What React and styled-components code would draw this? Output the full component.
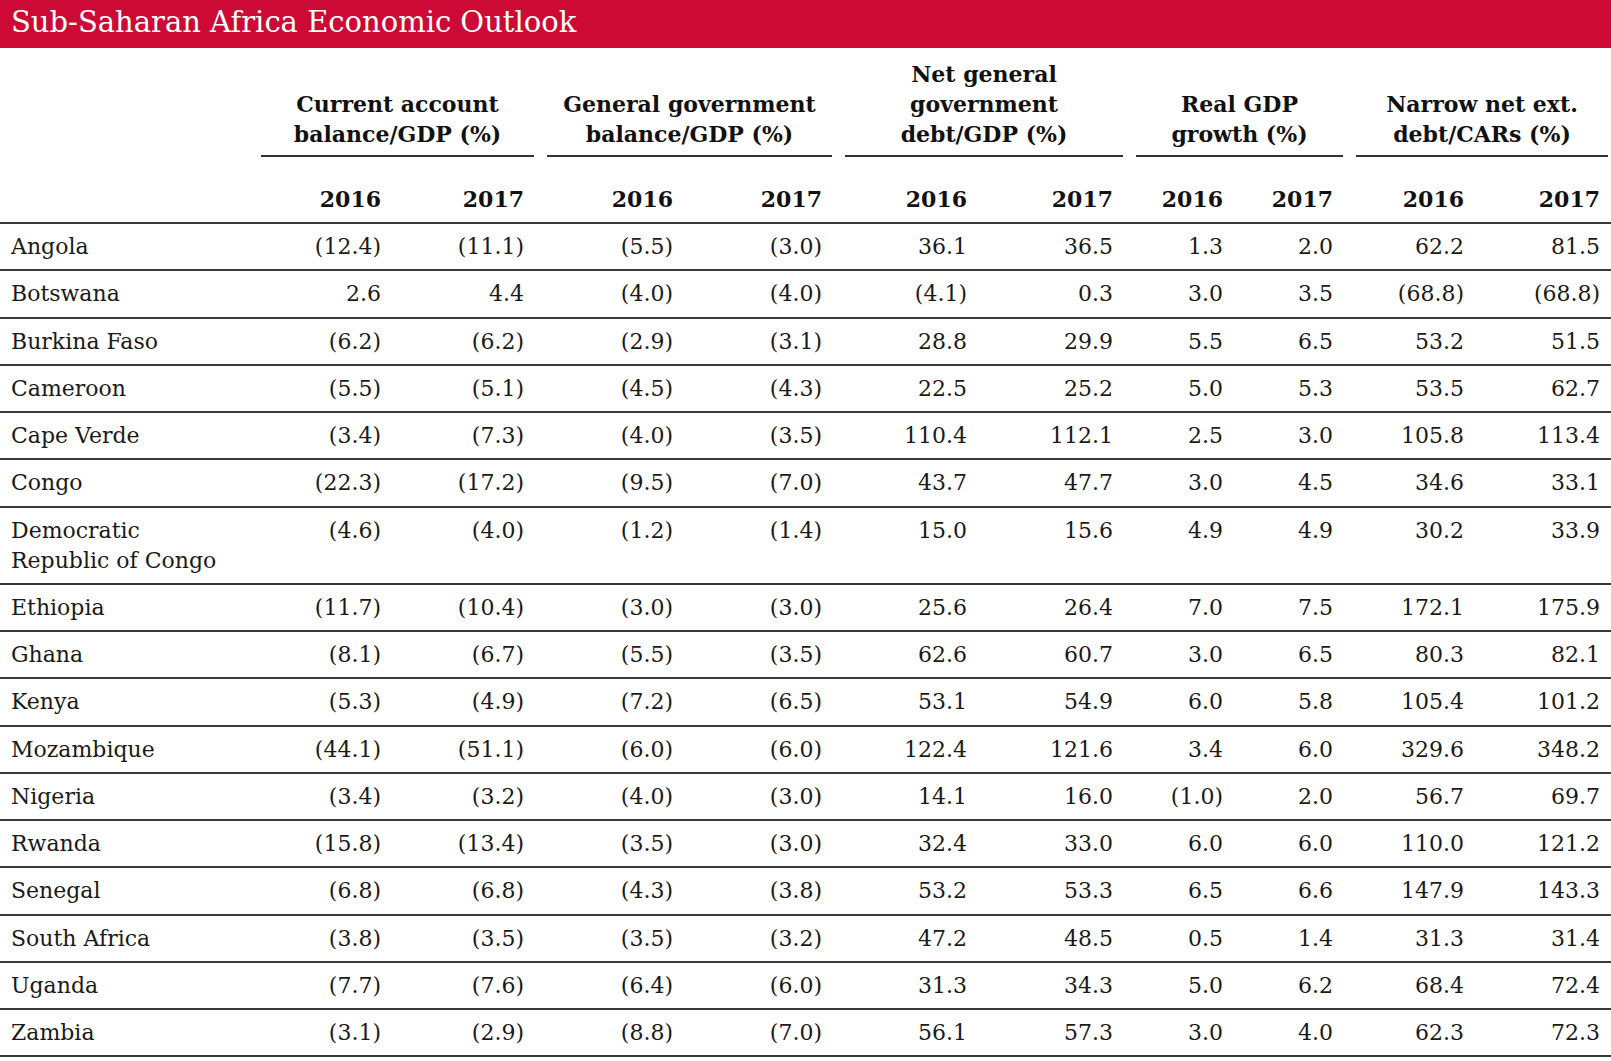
import React from 'react';
import styled, { createGlobalStyle } from 'styled-components';

const GlobalStyle = createGlobalStyle`
  html, body {
    margin: 0;
    padding: 0;
    background: #fff;
  }
  body {
    font-family: 'DejaVu Serif', 'Liberation Serif', serif;
    color: #1a1a1a;
  }
`;

const Page = styled.div`
  width: 1611px;
`;

const TitleBar = styled.div`
  height: 48px;
  background: #cc0a35;
  color: #fff;
  font-size: 29px;
  line-height: 45px;
  padding-left: 11px;
  box-sizing: border-box;
`;

const Table = styled.table`
  width: 1611px;
  border-collapse: collapse;
  table-layout: fixed;
  font-size: 22px;
  line-height: 30px;
`;

const GroupHead = styled.th`
  vertical-align: bottom;
  padding: 11px 0 0;
  font-weight: bold;
  color: #111;
  text-align: center;
`;

const GroupLabel = styled.div`
  padding-bottom: 6px;
  border-bottom: 2px solid #333;
  margin: 0 ${(p) => (p.$last ? '3px' : '6px')} 0 7px;
`;

const YearHead = styled.th`
  padding: 27px ${(p) => (p.$last ? '11px' : '16px')} 8px 0;
  text-align: right;
  font-weight: bold;
  color: #111;
  border-bottom: 2px solid #3a3a3a;
`;

const BlankHead = styled.th`
  border-bottom: ${(p) => (p.$line ? '2px solid #3a3a3a' : 'none')};
`;

const Cell = styled.td`
  padding: 8px 0 7.25px;
  vertical-align: top;
  border-bottom: 2px solid #3a3a3a;
`;

const CountryCell = styled(Cell)`
  padding-left: 11px;
  white-space: pre-line;
`;

const NumCell = styled(Cell)`
  text-align: right;
  padding-right: ${(p) => (p.$last ? '11px' : '16px')};
`;

const Label = styled.span`
  white-space: pre-line;
`;

const widths = [254, 143, 143, 149, 149, 145, 146, 110, 110, 131, 131];

const groups = [
  'Current account\nbalance/GDP (%)',
  'General government\nbalance/GDP (%)',
  'Net general\ngovernment\ndebt/GDP (%)',
  'Real GDP\ngrowth (%)',
  'Narrow net ext.\ndebt/CARs (%)',
];

const rows = [
  ['Angola', '(12.4)', '(11.1)', '(5.5)', '(3.0)', '36.1', '36.5', '1.3', '2.0', '62.2', '81.5'],
  ['Botswana', '2.6', '4.4', '(4.0)', '(4.0)', '(4.1)', '0.3', '3.0', '3.5', '(68.8)', '(68.8)'],
  ['Burkina Faso', '(6.2)', '(6.2)', '(2.9)', '(3.1)', '28.8', '29.9', '5.5', '6.5', '53.2', '51.5'],
  ['Cameroon', '(5.5)', '(5.1)', '(4.5)', '(4.3)', '22.5', '25.2', '5.0', '5.3', '53.5', '62.7'],
  ['Cape Verde', '(3.4)', '(7.3)', '(4.0)', '(3.5)', '110.4', '112.1', '2.5', '3.0', '105.8', '113.4'],
  ['Congo', '(22.3)', '(17.2)', '(9.5)', '(7.0)', '43.7', '47.7', '3.0', '4.5', '34.6', '33.1'],
  ['Democratic\nRepublic of Congo', '(4.6)', '(4.0)', '(1.2)', '(1.4)', '15.0', '15.6', '4.9', '4.9', '30.2', '33.9'],
  ['Ethiopia', '(11.7)', '(10.4)', '(3.0)', '(3.0)', '25.6', '26.4', '7.0', '7.5', '172.1', '175.9'],
  ['Ghana', '(8.1)', '(6.7)', '(5.5)', '(3.5)', '62.6', '60.7', '3.0', '6.5', '80.3', '82.1'],
  ['Kenya', '(5.3)', '(4.9)', '(7.2)', '(6.5)', '53.1', '54.9', '6.0', '5.8', '105.4', '101.2'],
  ['Mozambique', '(44.1)', '(51.1)', '(6.0)', '(6.0)', '122.4', '121.6', '3.4', '6.0', '329.6', '348.2'],
  ['Nigeria', '(3.4)', '(3.2)', '(4.0)', '(3.0)', '14.1', '16.0', '(1.0)', '2.0', '56.7', '69.7'],
  ['Rwanda', '(15.8)', '(13.4)', '(3.5)', '(3.0)', '32.4', '33.0', '6.0', '6.0', '110.0', '121.2'],
  ['Senegal', '(6.8)', '(6.8)', '(4.3)', '(3.8)', '53.2', '53.3', '6.5', '6.6', '147.9', '143.3'],
  ['South Africa', '(3.8)', '(3.5)', '(3.5)', '(3.2)', '47.2', '48.5', '0.5', '1.4', '31.3', '31.4'],
  ['Uganda', '(7.7)', '(7.6)', '(6.4)', '(6.0)', '31.3', '34.3', '5.0', '6.2', '68.4', '72.4'],
  ['Zambia', '(3.1)', '(2.9)', '(8.8)', '(7.0)', '56.1', '57.3', '3.0', '4.0', '62.3', '72.3'],
];

export default function App() {
  return (
    <Page>
      <GlobalStyle />
      <TitleBar>Sub-Saharan Africa Economic Outlook</TitleBar>
      <Table>
        <colgroup>
          {widths.map((w, i) => (
            <col key={i} style={{ width: w }} />
          ))}
        </colgroup>
        <thead>
          <tr>
            <BlankHead />
            {groups.map((g, i) => (
              <GroupHead key={i} colSpan={2}>
                <GroupLabel $last={i === groups.length - 1}>
                  <Label>{g}</Label>
                </GroupLabel>
              </GroupHead>
            ))}
          </tr>
          <tr>
            <BlankHead $line />
            {groups.flatMap((g, i) => [
              <YearHead key={i + 'a'}>2016</YearHead>,
              <YearHead key={i + 'b'} $last={i === groups.length - 1}>
                2017
              </YearHead>,
            ])}
          </tr>
        </thead>
        <tbody>
          {rows.map((r) => (
            <tr key={r[0]}>
              <CountryCell>{r[0]}</CountryCell>
              {r.slice(1).map((v, j) => (
                <NumCell key={j} $last={j === 9}>
                  {v}
                </NumCell>
              ))}
            </tr>
          ))}
        </tbody>
      </Table>
    </Page>
  );
}
